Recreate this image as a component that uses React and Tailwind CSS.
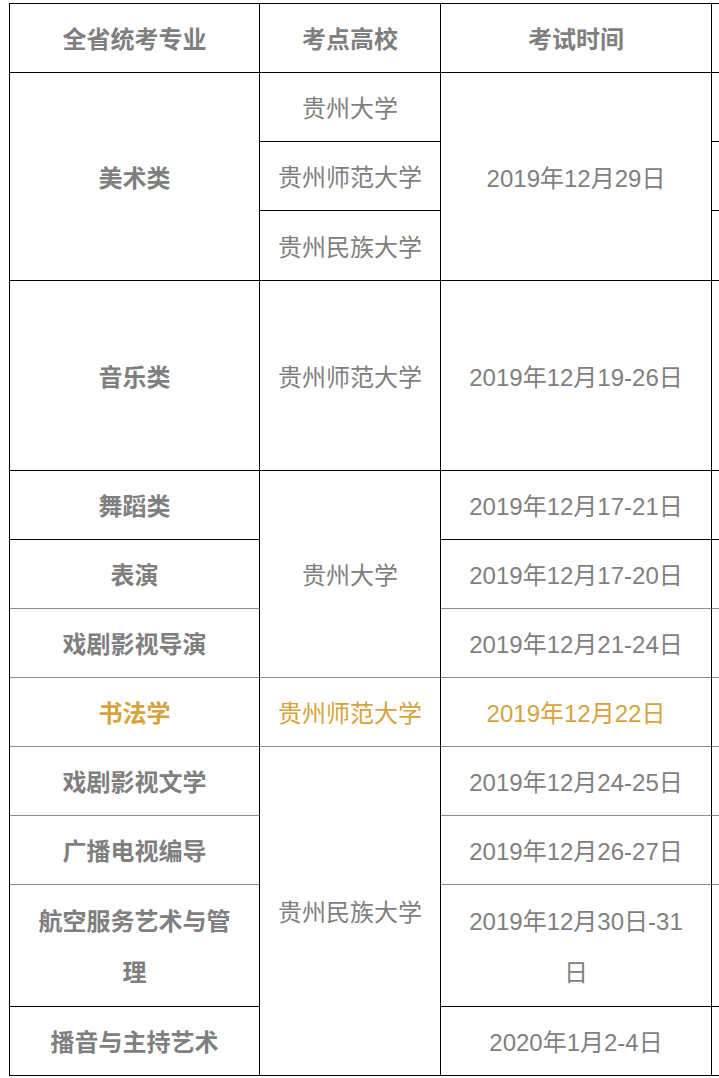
const GRAY = "border-b-[#8c8c8c]"
const BLACK = "border-b-black"

// [col, rowStart, rowSpan, text, opts]
const cells = [
  // column 1
  [1, 1, 1, "全省统考专业", { bold: true }],
  [1, 2, 3, "美术类", { bold: true }],
  [1, 5, 1, "音乐类", { bold: true }],
  [1, 6, 1, "舞蹈类", { bold: true }],
  [1, 7, 1, "表演", { bold: true, gray: true }],
  [1, 8, 1, "戏剧影视导演", { bold: true, gray: true }],
  [1, 9, 1, "书法学", { bold: true, gray: true, gold: true }],
  [1, 10, 1, "戏剧影视文学", { bold: true, gray: true }],
  [1, 11, 1, "广播电视编导", { bold: true, gray: true }],
  [1, 12, 1, ["航空服务艺术与管", "理"], { bold: true }],
  [1, 13, 1, "播音与主持艺术", { bold: true }],
  // column 2
  [2, 1, 1, "考点高校", { bold: true }],
  [2, 2, 1, "贵州大学", {}],
  [2, 3, 1, "贵州师范大学", {}],
  [2, 4, 1, "贵州民族大学", {}],
  [2, 5, 1, "贵州师范大学", {}],
  [2, 6, 3, "贵州大学", { gray: true }],
  [2, 9, 1, "贵州师范大学", { gray: true, gold: true }],
  [2, 10, 4, "贵州民族大学", {}],
  // column 3
  [3, 1, 1, "考试时间", { bold: true }],
  [3, 2, 3, "2019年12月29日", {}],
  [3, 5, 1, "2019年12月19-26日", {}],
  [3, 6, 1, "2019年12月17-21日", {}],
  [3, 7, 1, "2019年12月17-20日", { gray: true }],
  [3, 8, 1, "2019年12月21-24日", { gray: true }],
  [3, 9, 1, "2019年12月22日", { gray: true, gold: true }],
  [3, 10, 1, "2019年12月24-25日", { gray: true }],
  [3, 11, 1, "2019年12月26-27日", { gray: true }],
  [3, 12, 1, ["2019年12月30日-31", "日"], {}],
  [3, 13, 1, "2020年1月2-4日", {}],
]

// the cut-off fourth column at the right edge
for (let r = 1; r <= 13; r++) {
  cells.push([4, r, 1, "", { gray: r >= 7 && r <= 11 }])
}

const colStart = { 1: "col-start-1", 2: "col-start-2", 3: "col-start-3", 4: "col-start-4" }
const rowStart = {
  1: "row-start-1", 2: "row-start-2", 3: "row-start-3", 4: "row-start-4", 5: "row-start-5",
  6: "row-start-6", 7: "row-start-7", 8: "row-start-8", 9: "row-start-9", 10: "row-start-10",
  11: "row-start-11", 12: "row-start-12", 13: "row-start-13",
}
const rowSpan = { 1: "row-span-1", 3: "row-span-3", 4: "row-span-4" }

const Cell = ({ col, row, span, text, opts }) => {
  const lines = Array.isArray(text) ? text : [text]
  return (
    <div
      className={[
        colStart[col],
        rowStart[row],
        rowSpan[span],
        "flex flex-col items-center justify-center text-center pt-[3px] border-r border-b border-r-black",
        opts.gray ? GRAY : BLACK,
        opts.bold ? "font-bold" : "font-normal",
        opts.gold ? "text-[#d6a33c]" : "text-[#7f7f7f]",
      ].join(" ")}
    >
      {lines.map((l, i) => (
        <span key={i} className="block leading-[51px]">
          {l}
        </span>
      ))}
    </div>
  )
}

export default function App() {
  return (
    <div className="w-[719px] h-[1078px] overflow-hidden bg-white">
      <div
        className="ml-[9px] mt-[3px] w-[900px] grid grid-cols-[250px_181px_271px_198px] grid-rows-[69px_69px_69px_70px_190px_69px_69px_69px_69px_69px_69px_122px_69px] border-t border-l border-black text-[24px]"
        style={{ fontFamily: '"Liberation Sans", "Noto Sans CJK SC", sans-serif' }}
      >
        {cells.map(([col, row, span, text, opts], i) => (
          <Cell key={i} col={col} row={row} span={span} text={text} opts={opts} />
        ))}
      </div>
    </div>
  )
}
